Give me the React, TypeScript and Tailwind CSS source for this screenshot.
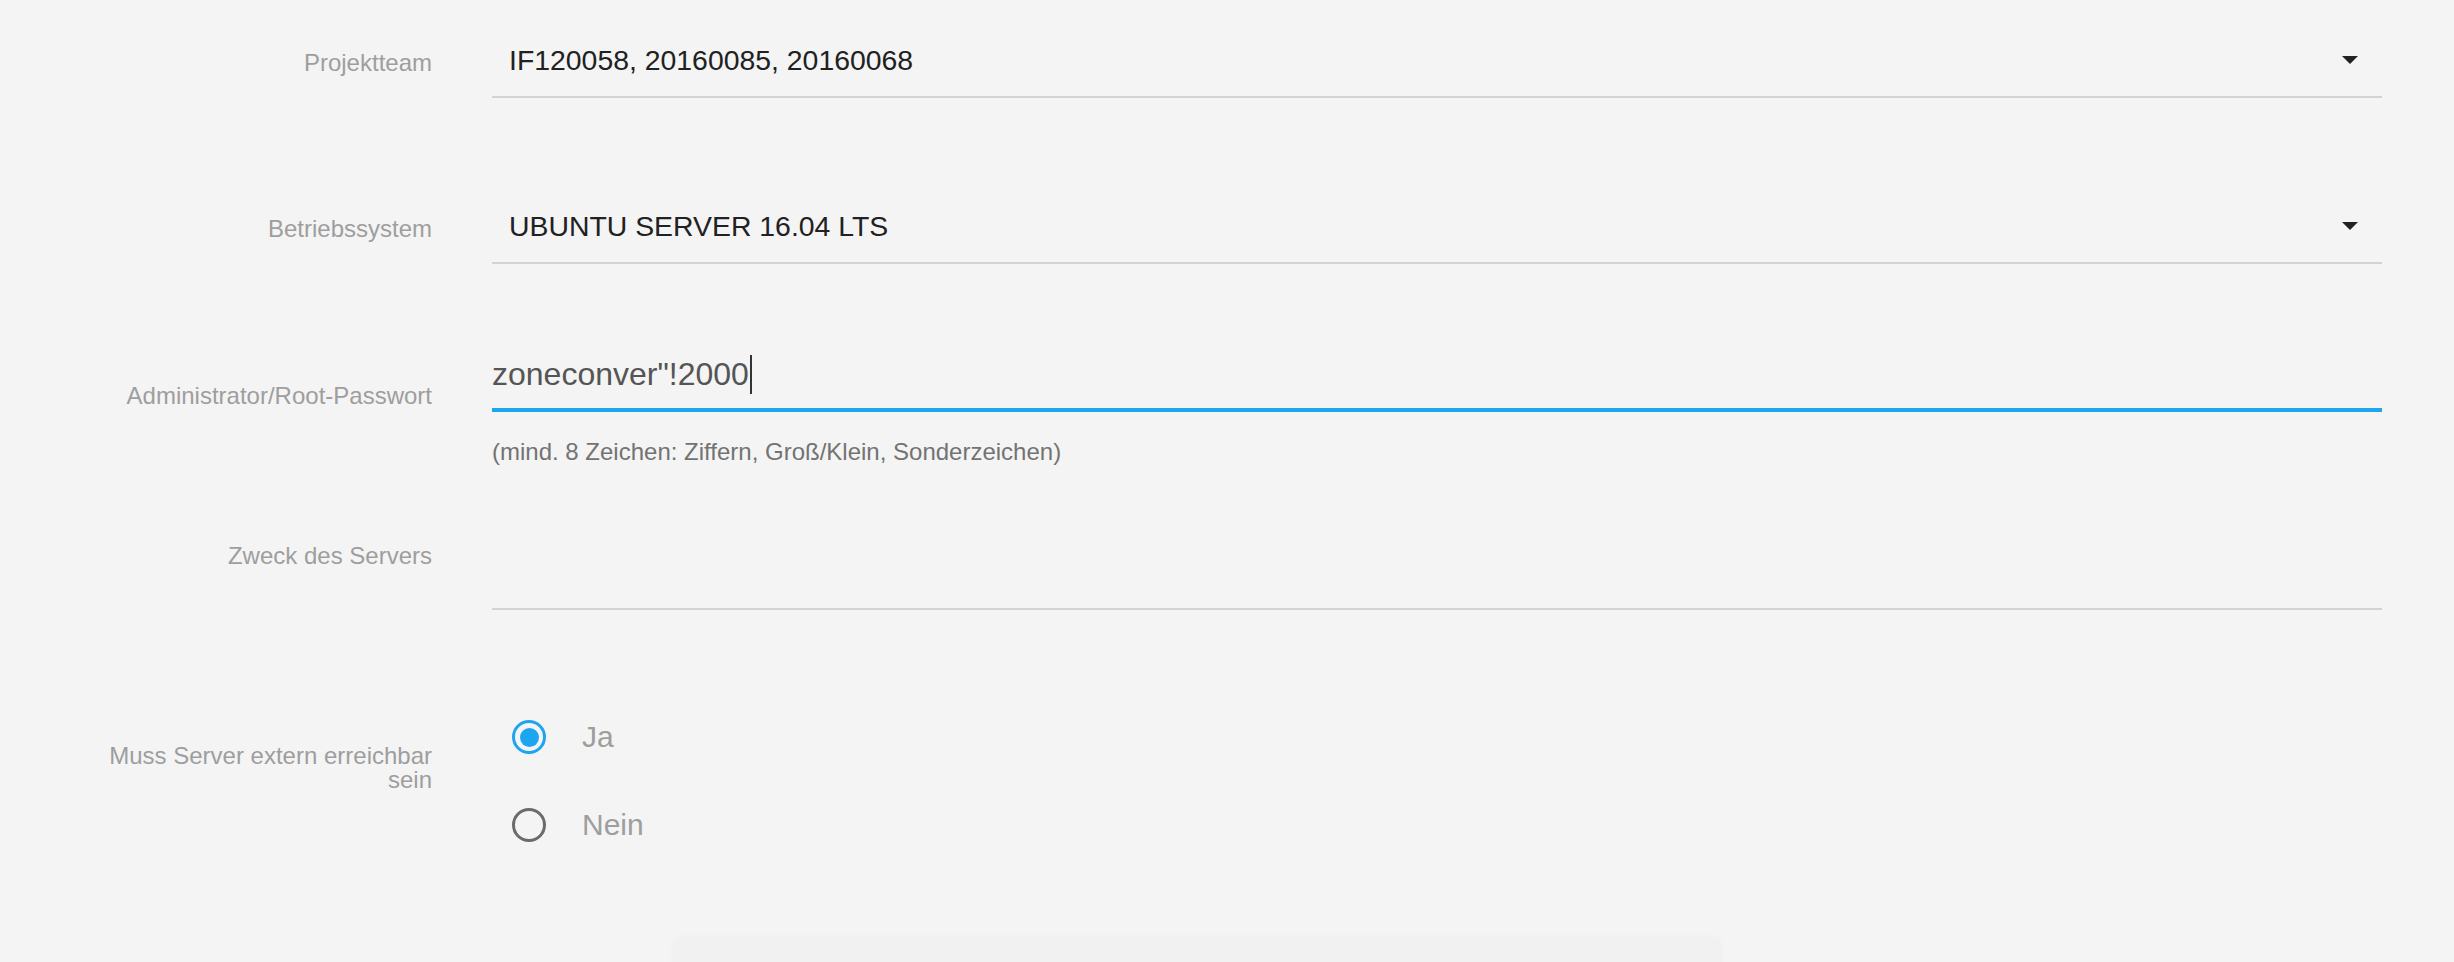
import React from "react"

const font = { fontFamily: '"Liberation Sans", Arial, sans-serif' }

function Arrow() {
  return (
    <svg width="16" height="8" viewBox="0 0 16 8" className="shrink-0">
      <path d="M0 0 L16 0 L8 8 Z" fill="#212121" />
    </svg>
  )
}

function SelectField({ value }: { value: string }) {
  return (
    <div className="flex-1 flex items-center justify-between pt-[46px] pb-[22px] pr-[24px] border-b-2 border-[#d3d3d3]">
      <span className="pl-[17px] text-[28.4px] leading-[28px] text-[#212121]">{value}</span>
      <Arrow />
    </div>
  )
}

function Label({ children, pt }: { children: React.ReactNode; pt: string }) {
  return (
    <div className={`w-[432px] shrink-0 text-right text-[24px] leading-[24px] text-[#9e9e9e] ${pt}`}>
      {children}
    </div>
  )
}

function Radio({ checked, label }: { checked: boolean; label: string }) {
  return (
    <div className="flex items-center h-[34px]">
      {checked ? (
        <div className="w-[34px] h-[34px] rounded-full border-[3px] border-[#1ea5ef] flex items-center justify-center">
          <div className="w-[19px] h-[19px] rounded-full bg-[#1ea5ef]" />
        </div>
      ) : (
        <div className="w-[34px] h-[34px] rounded-full border-[3px] border-[#6b6b6b]" />
      )}
      <span className="ml-[36px] text-[30px] leading-[30px] text-[#9e9e9e]">{label}</span>
    </div>
  )
}

export default function App() {
  return (
    <div className="h-[962px] overflow-hidden bg-[#f4f4f4]" style={font}>
      <div className="flex gap-[60px] pr-[72px]">
        <Label pt="pt-[51px]">Projektteam</Label>
        <SelectField value="IF120058, 20160085, 20160068" />
      </div>

      <div className="flex gap-[60px] pr-[72px] mt-[68px]">
        <Label pt="pt-[51px]">Betriebssystem</Label>
        <SelectField value="UBUNTU SERVER 16.04 LTS" />
      </div>

      <div className="flex gap-[60px] pr-[72px]">
        <Label pt="pt-[120px]">Administrator/Root-Passwort</Label>
        <div className="flex-1">
          <div className="pt-[95px] pb-[19px] border-b-4 border-[#1ea5ef]">
            <div className="flex items-center h-[30px]">
              <span className="text-[32px] leading-[30px] text-[#555555]">zoneconver"!2000</span>
              <span className="ml-[1px] w-[2px] h-[39px] shrink-0 bg-[#333333]" />
            </div>
          </div>
          <div className="mt-[28px] text-[24px] leading-[24px] text-[#737373]">
            (mind. 8 Zeichen: Ziffern, Groß/Klein, Sonderzeichen)
          </div>
        </div>
      </div>

      <div className="flex gap-[60px] pr-[72px]">
        <Label pt="pt-[80px]">Zweck des Servers</Label>
        <div className="flex-1 h-[146px] border-b-2 border-[#d3d3d3]" />
      </div>

      <div className="flex gap-[60px] pr-[72px]">
        <Label pt="pt-[134px]">
          Muss Server extern erreichbar
          <br />
          sein
        </Label>
        <div className="flex-1 pt-[110px] pl-[20px] flex flex-col gap-[54px]">
          <Radio checked label="Ja" />
          <Radio checked={false} label="Nein" />
        </div>
      </div>

      <div className="ml-[672px] w-[1050px] h-[30px] mt-[95px] rounded-t-[10px] bg-[#f1f1f1] shadow-[0_-2px_6px_rgba(0,0,0,0.015)]" />
    </div>
  )
}
